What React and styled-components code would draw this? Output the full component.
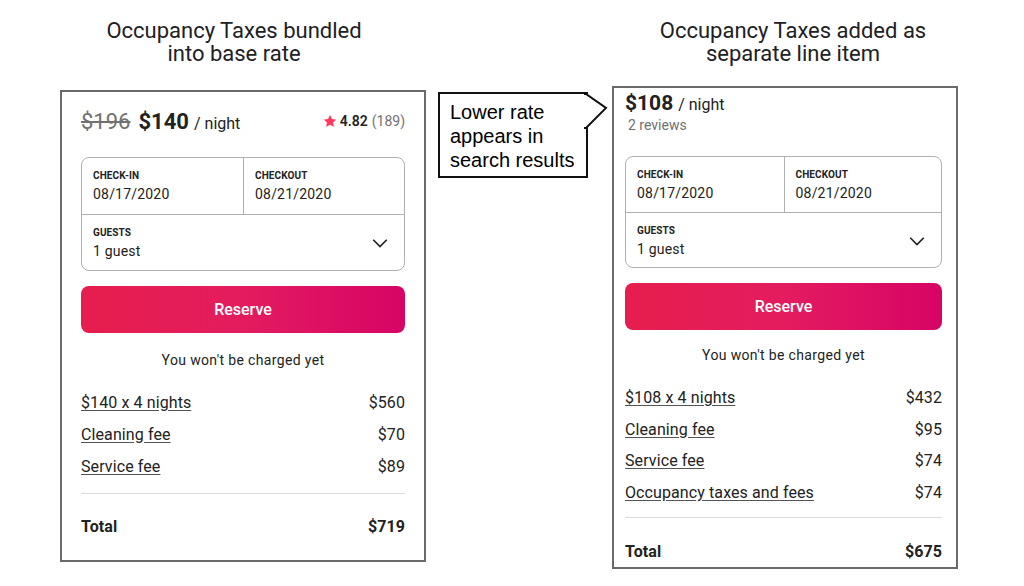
import React from 'react'
import styled, { createGlobalStyle, css } from 'styled-components'

const GlobalStyle = createGlobalStyle`
  html, body {
    margin: 0;
    padding: 0;
    background: #ffffff;
  }
  body {
    width: 1024px;
    height: 586px;
    overflow: hidden;
    font-family: Roboto, 'Liberation Sans', sans-serif;
    color: #222222;
  }
`

const Slide = styled.div`
  display: flex;
  align-items: flex-start;
  padding-left: 60px;
  width: 1024px;
  height: 586px;
  box-sizing: border-box;
`

const Column = styled.div`
  display: flex;
  flex-direction: column;
  width: ${({ $width }) => $width}px;
  margin-left: ${({ $gap }) => $gap || 0}px;
`

const Heading = styled.h2`
  margin: 0;
  font-family: Roboto, 'Liberation Sans', sans-serif;
  font-weight: 400;
  font-size: 22px;
  line-height: 23px;
  color: #202124;
  text-align: center;
  padding-top: 19px;
  height: ${({ $height }) => $height}px;
  box-sizing: border-box;
  padding-left: ${({ $shift }) => ($shift > 0 ? $shift * 2 : 0)}px;
  padding-right: ${({ $shift }) => ($shift < 0 ? -$shift * 2 : 0)}px;
`

const Card = styled.div`
  border: 2px solid #6a6a6a;
  box-sizing: border-box;
  height: ${({ $height }) => $height}px;
  padding: ${({ $pad }) => $pad};
  display: flex;
  flex-direction: column;
  font-family: Roboto, 'Liberation Sans', sans-serif;
  background: #fff;
`

const PriceRow = styled.div`
  display: flex;
  align-items: center;
  justify-content: space-between;
  height: 24px;
  margin-top: ${({ $top }) => $top}px;
`

const Prices = styled.div`
  display: flex;
  align-items: baseline;
  gap: 8px;
`

const OldPrice = styled.span`
  font-size: 22px;
  color: #717171;
  text-decoration: line-through;
  text-decoration-thickness: 2px;
`

const Price = styled.span`
  font-size: ${({ $size }) => $size}px;
  font-weight: 700;
  color: #222;
`

const PerNight = styled.span`
  font-size: 16px;
  color: #222;
  margin-left: -3px;
`

const Rating = styled.div`
  display: flex;
  align-items: center;
  gap: 4px;
  font-size: 14px;
  color: #222;

  b {
    font-weight: 600;
  }
  span {
    color: #717171;
  }
`

const Reviews = styled.div`
  font-size: 14px;
  line-height: 18px;
  color: #717171;
  margin: 1px 0 0 3px;
`

const Picker = styled.div`
  margin-top: ${({ $top }) => $top}px;
  border: 1px solid #b0b0b0;
  border-radius: 8px;
  display: grid;
  grid-template-columns: 1fr 1fr;
  grid-template-rows: ${({ $cell }) => $cell}px ${({ $cell }) => $cell}px;
`

const Field = styled.div`
  padding: 12px 12px 0 11px;
  display: flex;
  flex-direction: column;
  gap: 3px;

  ${({ $divider }) =>
    $divider &&
    css`
      border-left: 1px solid #b0b0b0;
    `}

  ${({ $wide }) =>
    $wide &&
    css`
      grid-column: 1 / 3;
      border-top: 1px solid #b0b0b0;
      flex-direction: row;
      justify-content: space-between;
    `}
`

const Label = styled.div`
  font-size: 10px;
  font-weight: 700;
  letter-spacing: 0.1px;
  color: #222;
  line-height: 12px;
`

const Value = styled.div`
  font-size: 14px;
  color: #222;
  line-height: 18px;
  letter-spacing: 0.2px;
  margin-top: ${({ $top }) => $top || 0}px;
`

const Chevron = styled.svg`
  width: 18px;
  height: 18px;
  margin-top: 6px;
  margin-right: 3px;
`

const ReserveButton = styled.button`
  margin-top: ${({ $top }) => $top}px;
  height: ${({ $height }) => $height}px;
  border: 0;
  border-radius: 8px;
  background: linear-gradient(to right, #e61e4d 0%, #e31c5f 50%, #d70466 100%);
  color: #fff;
  font-family: Roboto, 'Liberation Sans', sans-serif;
  font-size: 16px;
  font-weight: 500;
`

const Note = styled.div`
  margin-top: ${({ $top }) => $top}px;
  text-align: center;
  font-size: 14px;
  line-height: 20px;
  letter-spacing: 0.35px;
  color: #222;
`

const Lines = styled.div`
  margin-top: ${({ $top }) => $top}px;
  display: flex;
  flex-direction: column;
`

const Line = styled.div`
  display: flex;
  justify-content: space-between;
  align-items: center;
  height: ${({ $height }) => $height || 32}px;
  font-size: 16px;
  letter-spacing: 0.1px;
  color: #222;

  u {
    text-underline-offset: 2px;
    text-decoration-color: #555;
  }
`

const Divider = styled.hr`
  margin: ${({ $top }) => $top}px 0 0;
  border: 0;
  border-top: 1px solid #dddddd;
`

const TotalRow = styled(Line)`
  margin-top: ${({ $top }) => $top}px;
  font-weight: 700;
`

const Callout = styled.div`
  position: relative;
  margin: 92px 0 0 12px;
  width: 150px;
  height: 86px;
  box-sizing: border-box;
  border: 2px solid #111;
  background: #fff;
  padding: 6px 0 0 10px;
  font-family: 'Liberation Sans', Arial, sans-serif;
  font-size: 20px;
  line-height: 24px;
  color: #000;
`

const Tail = styled.svg`
  position: absolute;
  left: 144px;
  top: -2px;
  width: 28px;
  height: 40px;
  overflow: visible;
`

const Star = () => (
  <svg width="12" height="12" viewBox="0 0 32 32">
    <path
      fill="#ff385c"
      d="M15.1 1.58l-4.13 8.88-9.86 1.27a1 1 0 0 0-.54 1.74l7.3 6.57-1.97 9.85a1 1 0 0 0 1.48 1.06l8.62-5 8.63 5a1 1 0 0 0 1.48-1.06l-1.97-9.85 7.3-6.57a1 1 0 0 0-.55-1.73l-9.86-1.28-4.12-8.88a1 1 0 0 0-1.82 0z"
    />
  </svg>
)

const Booking = ({ layout, oldPrice, price, rating, reviews, lines, total }) => {
  const l = layout
  return (
    <Card $height={l.height} $pad={l.pad}>
      <PriceRow $top={l.priceTop}>
        <Prices>
          {oldPrice && <OldPrice>{oldPrice}</OldPrice>}
          <Price $size={l.priceSize}>{price}</Price>
          <PerNight>/ night</PerNight>
        </Prices>
        {rating && (
          <Rating>
            <Star />
            <b>{rating}</b>
            <span>({reviews})</span>
          </Rating>
        )}
      </PriceRow>
      {!rating && <Reviews>{reviews} reviews</Reviews>}
      <Picker $top={l.pickerTop} $cell={l.cell}>
        <Field>
          <Label>CHECK-IN</Label>
          <Value>08/17/2020</Value>
        </Field>
        <Field $divider>
          <Label>CHECKOUT</Label>
          <Value>08/21/2020</Value>
        </Field>
        <Field $wide>
          <div>
            <Label>GUESTS</Label>
            <Value $top={3}>1 guest</Value>
          </div>
          <Chevron viewBox="0 0 32 32" fill="none" stroke="#222" strokeWidth="3">
            <path d="M28 12L16 24 4 12" />
          </Chevron>
        </Field>
      </Picker>
      <ReserveButton $top={l.reserveTop} $height={l.reserveHeight}>
        Reserve
      </ReserveButton>
      <Note $top={l.noteTop}>You won't be charged yet</Note>
      <Lines $top={l.linesTop}>
        {lines.map(([label, amount]) => (
          <Line key={label} $height={l.lineHeight}>
            <u>{label}</u>
            <span>{amount}</span>
          </Line>
        ))}
      </Lines>
      <Divider $top={l.dividerTop} />
      <TotalRow $top={l.totalTop}>
        <span>Total</span>
        <span>{total}</span>
      </TotalRow>
    </Card>
  )
}

const leftLayout = {
  height: 472,
  pad: '0 19px',
  priceTop: 17,
  priceSize: 22,
  pickerTop: 24,
  cell: 56,
  reserveTop: 15,
  reserveHeight: 47,
  noteTop: 17,
  linesTop: 16,
  lineHeight: 32,
  dividerTop: 11,
  totalTop: 16,
}

const rightLayout = {
  height: 483,
  pad: '0 14px 0 11px',
  priceTop: 3,
  priceSize: 21,
  pickerTop: 22,
  cell: 55,
  reserveTop: 15,
  reserveHeight: 47,
  noteTop: 15,
  linesTop: 17,
  lineHeight: 31.7,
  dividerTop: 9,
  totalTop: 17,
}

export default function App() {
  return (
    <>
      <GlobalStyle />
      <Slide>
        <Column $width={366}>
          <Heading $height={90} $shift={-9}>
            Occupancy Taxes bundled
            <br />
            into base rate
          </Heading>
          <Booking
            layout={leftLayout}
            oldPrice="$196"
            price="$140"
            rating="4.82"
            reviews="189"
            lines={[
              ['$140 x 4 nights', '$560'],
              ['Cleaning fee', '$70'],
              ['Service fee', '$89'],
            ]}
            total="$719"
          />
        </Column>
        <Callout>
          Lower rate
          <br />
          appears in
          <br />
          search results
          <Tail viewBox="0 0 28 40">
            <path d="M0 2 L2 2 L22 16 L2 36 L0 36" fill="#fff" stroke="#111" strokeWidth="2" />
          </Tail>
        </Callout>
        <Column $width={346} $gap={24}>
          <Heading $height={86} $shift={8}>
            Occupancy Taxes added as
            <br />
            separate line item
          </Heading>
          <Booking
            layout={rightLayout}
            price="$108"
            reviews="2"
            lines={[
              ['$108 x 4 nights', '$432'],
              ['Cleaning fee', '$95'],
              ['Service fee', '$74'],
              ['Occupancy taxes and fees', '$74'],
            ]}
            total="$675"
          />
        </Column>
      </Slide>
    </>
  )
}
